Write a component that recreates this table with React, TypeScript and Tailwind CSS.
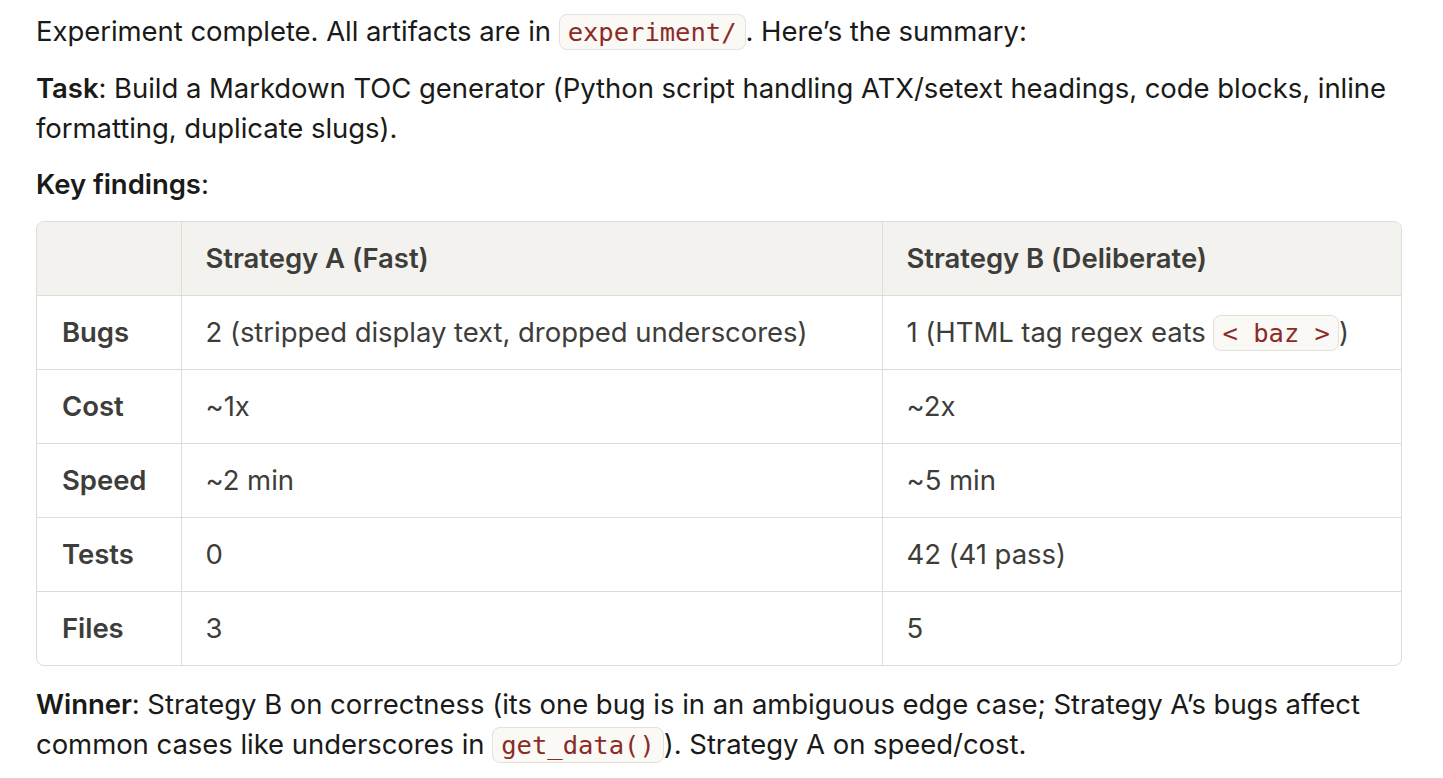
import React from "react";

const rows = [
  { label: "Bugs", a: "2 (stripped display text, dropped underscores)", b: null },
  { label: "Cost", a: "~1x", b: "~2x" },
  { label: "Speed", a: "~2 min", b: "~5 min" },
  { label: "Tests", a: "0", b: "42 (41 pass)" },
  { label: "Files", a: "3", b: "5" },
];

function Code({ children }: { children: React.ReactNode }) {
  return (
    <code className="rounded-[8px] border border-[#e3e1dc] bg-[#faf9f6] px-[8px] py-[2px] font-['DejaVu_Sans_Mono',monospace] text-[25.5px] tracking-normal text-[#8c2b26]">
      {children}
    </code>
  );
}

export default function App() {
  return (
    <div className="min-h-screen bg-white px-[36px] pt-[11px] font-['Inter',sans-serif] text-[27.5px] leading-[40px] tracking-[-0.05px] text-[#1a1a18]">
      <p>
        Experiment complete. All artifacts are in <Code>experiment/</Code>. Here’s the summary:
      </p>
      <p className="mt-[16px] w-[1370px]">
        <span className="font-semibold">Task</span>: Build a Markdown TOC generator (Python script handling
        ATX/setext headings, code blocks, inline formatting, duplicate slugs).
      </p>
      <p className="mt-[16px]">
        <span className="font-semibold">Key findings</span>:
      </p>

      <div className="mt-[17px] w-[1366px] overflow-hidden rounded-[8px] border border-[#dedcd7]">
        <table className="w-full border-collapse text-[#3d3d3a]">
          <thead>
            <tr className="h-[73px] bg-[#f4f2ee]">
              <th className="w-[144px] border-r border-b border-[#dedcd7]"></th>
              <th className="w-[701px] border-r border-b border-[#dedcd7] pl-[24px] text-left font-semibold">
                Strategy A (Fast)
              </th>
              <th className="border-b border-[#dedcd7] pl-[24px] text-left font-semibold">
                Strategy B (Deliberate)
              </th>
            </tr>
          </thead>
          <tbody>
            {rows.map((r, i) => (
              <tr key={r.label} className="h-[74px]">
                <td
                  className={`border-r border-[#dedcd7] pl-[25px] font-semibold ${
                    i < rows.length - 1 ? "border-b" : ""
                  }`}
                >
                  {r.label}
                </td>
                <td
                  className={`border-r border-[#dedcd7] pl-[24px] ${
                    i < rows.length - 1 ? "border-b" : ""
                  }`}
                >
                  {r.a}
                </td>
                <td className={`border-[#dedcd7] pl-[24px] ${i < rows.length - 1 ? "border-b" : ""}`}>
                  {r.b ?? (
                    <>
                      1 (HTML tag regex eats <Code>&lt; baz &gt;</Code>)
                    </>
                  )}
                </td>
              </tr>
            ))}
          </tbody>
        </table>
      </div>

      <p className="mt-[18px]">
        <span className="font-semibold">Winner</span>: Strategy B on correctness (its one bug is in an ambiguous
        edge case; Strategy A’s bugs affect common cases like underscores in <Code>get_data()</Code>). Strategy
        A on speed/cost.
      </p>
    </div>
  );
}
